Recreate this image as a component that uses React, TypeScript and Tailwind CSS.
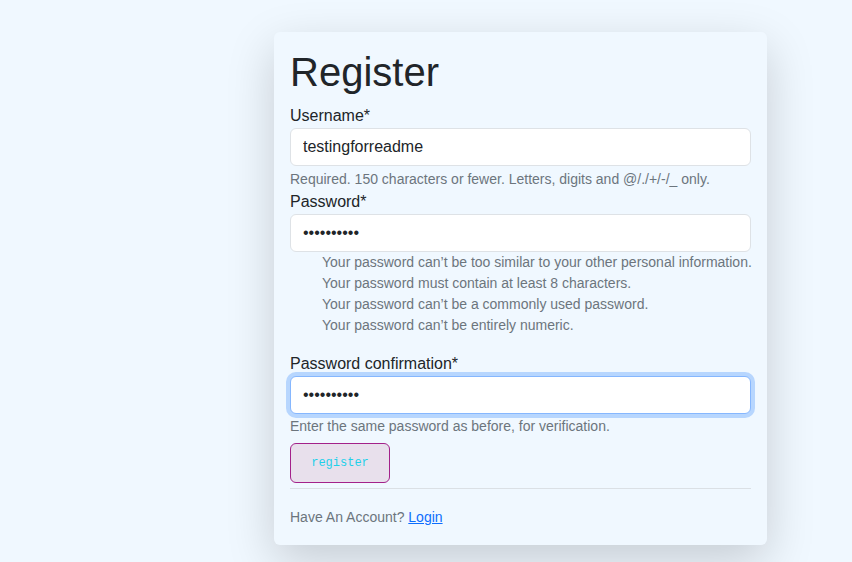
import { useEffect, useRef } from "react";

const passwordHelp = [
  "Your password can’t be too similar to your other personal information.",
  "Your password must contain at least 8 characters.",
  "Your password can’t be a commonly used password.",
  "Your password can’t be entirely numeric.",
];

/**
 * Register card: username, password + confirmation with Django-style help text,
 * a register button and a link back to login.
 */
export default function App() {
  const confirmRef = useRef<HTMLInputElement>(null);

  useEffect(() => {
    const el = confirmRef.current;
    if (el) {
      el.focus();
      el.setSelectionRange(el.value.length, el.value.length);
    }
  }, []);

  return (
    <div className="min-h-screen bg-[#f0f8ff] pt-8 font-['Liberation_Sans',Arial,sans-serif] text-[#212529]">
      <div className="ml-[274px] w-[493px] rounded-md bg-[#f0f8ff] px-4 pt-4 pb-[17px] shadow-[0_16px_48px_rgba(0,0,0,0.175)]">
        <h1 className="mb-2 text-[40px] leading-[48px] font-normal">Register</h1>

        <form onSubmit={(e) => e.preventDefault()}>
          <Field label="Username*">
            <input
              type="text"
              defaultValue="testingforreadme"
              className="block h-[38px] w-full rounded-md border border-[#dee2e6] bg-white px-3 text-base outline-none"
            />
          </Field>
          <p className="mt-[3px] text-sm leading-[21px] text-[#6c757d]">
            Required. 150 characters or fewer. Letters, digits and @/./+/-/_ only.
          </p>

          <Field label="Password*">
            <input
              type="password"
              defaultValue="testing123"
              className="block h-[38px] w-full rounded-md border border-[#dee2e6] bg-white px-3 text-base outline-none"
            />
          </Field>
          <ul className="mb-4 pl-8 text-sm leading-[21px] text-[#6c757d]">
            {passwordHelp.map((t) => (
              <li key={t} className="whitespace-nowrap">
                {t}
              </li>
            ))}
          </ul>

          <Field label="Password confirmation*">
            <input
              ref={confirmRef}
              type="password"
              defaultValue="testing123"
              className="block h-[38px] w-full rounded-md border border-[#86b7fe] bg-white px-3 text-base caret-black shadow-[0_0_0_4px_rgba(13,110,253,0.25)] outline-none"
            />
          </Field>
          <p className="mt-[2px] text-sm leading-[21px] text-[#6c757d]">
            Enter the same password as before, for verification.
          </p>

          <button
            type="submit"
            className="mt-[6px] h-10 w-[100px] rounded-md border border-[#a3218a] bg-[#e8e0ec] font-['Liberation_Mono','Courier_New',monospace] text-[12px] text-[#1fd0ea]"
          >
            register
          </button>
        </form>

        <hr className="mt-[5px] mb-[18px] border-t border-[#dbe0e5]" />

        <p className="text-sm leading-[21px] text-[#6c757d]">
          Have An Account?{" "}
          <a href="#" className="text-[#0d6efd] underline">
            Login
          </a>
        </p>
      </div>
    </div>
  );
}

function Field({ label, children }: { label: string; children: React.ReactNode }) {
  return (
    <div>
      <label className="block text-base leading-6">{label}</label>
      {children}
    </div>
  );
}
